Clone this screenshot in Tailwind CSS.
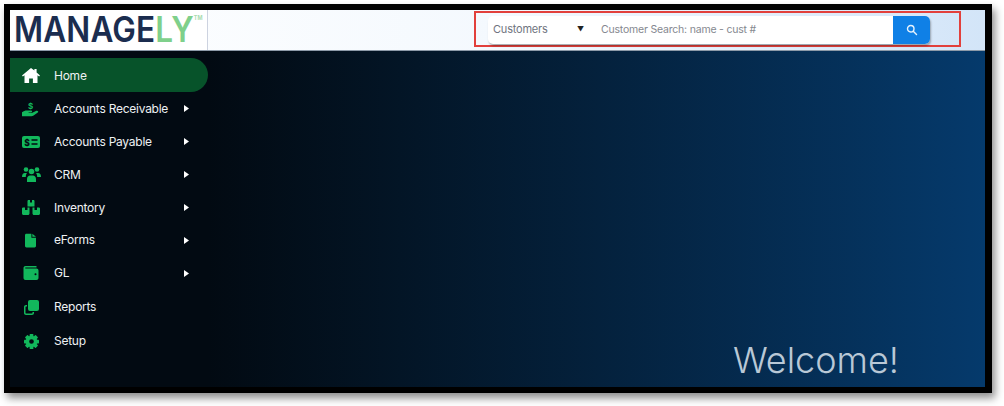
<!DOCTYPE html>
<html lang="en">
<head>
    <meta charset="UTF-8">
    <title>Managely</title>
    <script src="https://cdn.jsdelivr.net/npm/@tailwindcss/browser@4"></script>
</head>
<body class="bg-white h-[406px] overflow-hidden font-['Inter',sans-serif]">
    <div class="ml-[4px] mt-[4px] w-[988px] h-[389px] border-t-[6px] border-l-[6px] border-r-[7px] border-b-[6px] border-black shadow-[3px_5px_8px_rgba(0,0,0,0.45)] flex flex-col">

        <!-- top bar -->
        <header class="h-[41px] flex bg-gradient-to-r from-white via-[#f4f9fe] to-[#d3e5f8] border-b border-[#8d9aa8]">
            <div class="w-[198px] bg-white border-r border-[#cdd3e0] pl-[4px]">
                <div class="flex items-start w-[220px] origin-left scale-x-[0.9]">
                    <span class="text-[35px] leading-[39px] font-semibold tracking-[0.2px] text-[#1b2d4f]">MANAGE<span class="text-[#7fd08b]">LY</span></span>
                    <span class="text-[6px] leading-[16px] font-bold text-[#a9dcb0]">TM</span>
                </div>
            </div>
            <div class="flex-1 pl-[266px] pt-[1px]">
                <div class="w-[487px] h-[36px] border-2 border-[#e2403c] pl-[12px] pt-[3px]">
                    <div class="w-[442px] h-[28px] bg-white rounded-[5px] shadow-[1px_2px_2px_rgba(0,0,0,0.3)] flex items-center text-[11px] tracking-[-0.2px] text-[#6f7480]">
                        <span class="w-[89px] pl-[5px] pb-[1px]">Customers</span>
                        <span class="w-[24px] text-[7px] text-[#222]">▼</span>
                        <span class="flex-1 text-[10.5px] text-[#85888f]">Customer Search: name - cust #</span>
                        <button class="w-[37px] h-[28px] bg-[#0f80e6] rounded-r-[5px] flex items-center justify-center">
                            <svg class="w-[12px] h-[12px]" viewBox="0 0 24 24" fill="none" stroke="#e6f2fd" stroke-width="2.8" stroke-linecap="round"><circle cx="9.5" cy="9.5" r="6.5"/><path d="M14.5 14.5L21 21"/></svg>
                        </button>
                    </div>
                </div>
            </div>
        </header>

        <div class="flex-1 flex bg-[#020a12]">
            <!-- sidebar -->
            <nav class="w-[198px] pt-[7px] text-[12px] tracking-[-0.25px] text-[#eef1f3]">
                <a class="h-[34px] flex items-center bg-[#07532a] rounded-r-[17px]">
                    <span class="w-[42px] mr-[2px] flex justify-center"><svg class="w-[18px] h-[15px]" viewBox="0 0 18 15" fill="#fff"><path d="M9 0L0 7.6l.9 1L2.500 7.300V15h4.600v-4.600h3.800V15h4.600V7.300l1.600 1.300.9-1L14.600 4.400V1h-2.200v1.500z"/></svg></span>
                    <span class="pt-[2px]">Home</span>
                </a>
                <a class="h-[33px] flex items-center">
                    <span class="w-[42px] mr-[2px] flex justify-center"><svg class="w-[18px] h-[16px]" viewBox="0 0 18 16" fill="#12b85c"><path d="M0 11.200c1.600-1.200 3.200-1.800 4.600-1.800h4.200c.9 0 1.300.5 1.300 1s-.5 1-1.300 1H6.600v.6h3.200l4.600-2.200c1.100-.5 2.600.7 1.400 1.600l-4.200 3.100c-.8.6-1.400.8-2.200.8H0z"/><text x="8.500" y="7.500" font-size="8" font-weight="700" text-anchor="middle">$</text></svg></span>
                    <span class="w-[130px]">Accounts Receivable</span>
                    <svg class="w-[5px] h-[7px]" viewBox="0 0 5 7" fill="#fff"><path d="M0 0L5 3.500L0 7z"/></svg>
                </a>
                <a class="h-[33px] flex items-center">
                    <span class="w-[42px] mr-[2px] flex justify-center"><svg class="w-[18px] h-[12px]" viewBox="0 0 18 12"><rect width="18" height="12" rx="2" fill="#12b85c"/><path d="M9.500 4h6M9.500 8h6" stroke="#020a12" stroke-width="1.400"/><text x="5" y="9.500" font-size="8.500" font-weight="800" text-anchor="middle" fill="#020a12">$</text></svg></span>
                    <span class="w-[130px]">Accounts Payable</span>
                    <svg class="w-[5px] h-[7px]" viewBox="0 0 5 7" fill="#fff"><path d="M0 0L5 3.500L0 7z"/></svg>
                </a>
                <a class="h-[33px] flex items-center">
                    <span class="w-[42px] mr-[2px] flex justify-center"><svg class="w-[19px] h-[15px]" viewBox="0 0 19 15" fill="#12b85c"><circle cx="4" cy="2.500" r="2.300"/><circle cx="15" cy="2.500" r="2.300"/><circle cx="9.500" cy="4.500" r="2.800"/><path d="M0 10c0-2.500 1-4 3-4h2c-.8 1-1.200 2.300-1.200 4zM19 10c0-2.500-1-4-3-4h-2c.8 1 1.200 2.300 1.200 4zM5 15v-3c0-2 1.500-3.500 3-3.500h3c1.500 0 3 1.500 3 3.500v3z"/></svg></span>
                    <span class="w-[130px]">CRM</span>
                    <svg class="w-[5px] h-[7px]" viewBox="0 0 5 7" fill="#fff"><path d="M0 0L5 3.500L0 7z"/></svg>
                </a>
                <a class="h-[33px] flex items-center">
                    <span class="w-[42px] mr-[2px] flex justify-center"><svg class="w-[18px] h-[15px]" viewBox="0 0 18 15" fill="#12b85c"><path d="M5.500 1c0-.5.500-1 1-1H8v2.500h2V0h1.500c.5 0 1 .5 1 1v5.500h-7z"/><path d="M0 8.500C0 7.700.7 7.500 1.500 7.500H3V10h2.500V7.500h2v6c0 .8-.7 1.500-1.500 1.500H1.500C.7 15 0 14.300 0 13.500z"/><path d="M10.500 7.500H12.500V10H15V7.500h1.500c.8 0 1.500.2 1.500 1v5c0 .8-.7 1.500-1.500 1.500H12c-.8 0-1.500-.7-1.500-1.500z"/></svg></span>
                    <span class="w-[130px]">Inventory</span>
                    <svg class="w-[5px] h-[7px]" viewBox="0 0 5 7" fill="#fff"><path d="M0 0L5 3.500L0 7z"/></svg>
                </a>
                <a class="h-[32px] flex items-center">
                    <span class="w-[41px] mr-[3px] flex justify-center"><svg class="w-[11px] h-[15px]" viewBox="0 0 12 15" fill="#12b85c"><path d="M1.500 0H7v4.500h5v9c0 .8-.7 1.500-1.500 1.500h-9C.7 15 0 14.300 0 13.500v-12C0 .7.700 0 1.500 0zM8 0l4 3.500H8z"/></svg></span>
                    <span class="w-[130px]">eForms</span>
                    <svg class="w-[5px] h-[7px]" viewBox="0 0 5 7" fill="#fff"><path d="M0 0L5 3.500L0 7z"/></svg>
                </a>
                <a class="h-[34px] flex items-center">
                    <span class="w-[42px] mr-[2px] flex justify-center"><svg class="w-[16px] h-[14px]" viewBox="0 0 15 14" fill="#12b85c"><path d="M2 0h11v1.500H2c-.5 0-.5 1 0 1h11c1.100 0 2 .9 2 2V12c0 1.100-.9 2-2 2H2c-1.100 0-2-.9-2-2V2C0 .9.900 0 2 0z"/><circle cx="12" cy="8.300" r="1" fill="#020a12"/></svg></span>
                    <span class="w-[130px]">GL</span>
                    <svg class="w-[5px] h-[7px]" viewBox="0 0 5 7" fill="#fff"><path d="M0 0L5 3.500L0 7z"/></svg>
                </a>
                <a class="h-[34px] flex items-center">
                    <span class="w-[42px] mr-[2px] flex justify-center"><svg class="w-[15px] h-[15px]" viewBox="0 0 15 15" fill="#12b85c"><rect x="4" y="0" width="11" height="11" rx="2"/><path d="M0 7c0-1.100.9-2 2-2h1v1.500H2c-.3 0-.5.200-.5.500v6c0 .3.200.5.500.5h6c.3 0 .5-.2.500-.5v-1H10v1c0 1.100-.9 2-2 2H2c-1.100 0-2-.9-2-2z"/></svg></span>
                    <span>Reports</span>
                </a>
                <a class="h-[34px] flex items-center">
                    <span class="w-[42px] mr-[2px] flex justify-center"><svg class="w-[15px] h-[15px]" viewBox="0 0 24 24" fill="#12b85c"><circle cx="12" cy="12" r="6.500" fill="none" stroke="#12b85c" stroke-width="5.500"/><rect x="9" y="0" width="6" height="6" rx="1"/><rect x="9" y="18" width="6" height="6" rx="1"/><rect x="0" y="9" width="6" height="6" rx="1"/><rect x="18" y="9" width="6" height="6" rx="1"/><rect x="9" y="0" width="6" height="6" rx="1" transform="rotate(45 12 12)"/><rect x="9" y="18" width="6" height="6" rx="1" transform="rotate(45 12 12)"/><rect x="0" y="9" width="6" height="6" rx="1" transform="rotate(45 12 12)"/><rect x="18" y="9" width="6" height="6" rx="1" transform="rotate(45 12 12)"/></svg></span>
                    <span>Setup</span>
                </a>
            </nav>

            <!-- main area -->
            <main class="flex-1 bg-gradient-to-r from-[#020a12] to-[#053a6c] flex items-end justify-end pr-[86px] pb-[5px]">
                <h1 class="text-[36px] leading-[44px] font-light text-[#b9c8d6]">Welcome!</h1>
            </main>
        </div>
    </div>
</body>
</html>
